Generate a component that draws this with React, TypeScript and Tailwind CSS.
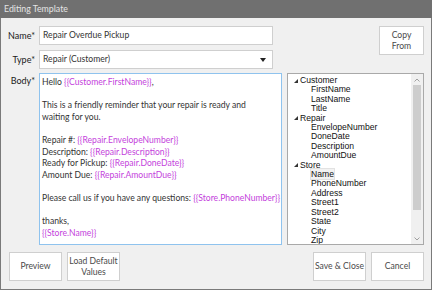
import React from "react";

const M = "text-[#c43fdc]";

function Tok({ t }: { t: string }) {
  return <span className={M}>{`{{${t}}}`}</span>;
}

const tree: { name: string; children: string[] }[] = [
  { name: "Customer", children: ["FirstName", "LastName", "Title"] },
  { name: "Repair", children: ["EnvelopeNumber", "DoneDate", "Description", "AmountDue"] },
  { name: "Store", children: ["Name", "PhoneNumber", "Address", "Street1", "Street2", "State", "City", "Zip"] },
];

function Btn({ children, className = "" }: { children: React.ReactNode; className?: string }) {
  return (
    <div
      className={
        "h-[29px] bg-white border border-[#cfcfcf] flex flex-col items-center justify-center text-[8.6px] leading-[11px] text-[#4a4a4a] text-center " +
        className
      }
    >
      {children}
    </div>
  );
}

export default function App() {
  return (
    <div className="w-[432px] h-[290px] bg-[#f0f0f0] flex flex-col font-['Lato',sans-serif] overflow-hidden">
      <div className="h-[18px] bg-[#707070] text-[#e4e4e4] text-[8.8px] pl-[4px] flex items-center shrink-0">
        Editing Template
      </div>
      <div className="flex-1 border-x border-b border-[#7a7a7a] flex flex-col">
        {/* top */}
        <div className="flex pt-[8px] pr-[7px]">
          <div className="flex flex-col gap-[5px]">
            <div className="flex items-center gap-[4px]">
              <div className="w-[34px] text-right text-[9px] text-[#1a1a1a]">Name*</div>
              <div className="w-[234px] h-[19px] bg-white border border-[#cfcfcf] flex items-center pl-[3px] text-[8.6px] text-[#333]">
                Repair Overdue Pickup
              </div>
            </div>
            <div className="flex items-center gap-[4px]">
              <div className="w-[34px] text-right text-[9px] text-[#1a1a1a]">Type*</div>
              <div className="w-[234px] h-[19px] bg-white border border-[#cfcfcf] flex items-center pl-[3px] pr-[6px] text-[8.6px] text-[#333]">
                <span className="flex-1">Repair (Customer)</span>
                <svg width="6" height="4" viewBox="0 0 6 4">
                  <path d="M0 0h6L3 4z" fill="#222" />
                </svg>
              </div>
            </div>
          </div>
          <div className="flex-1" />
          <Btn className="w-[45px]">
            <span>Copy</span>
            <span>From</span>
          </Btn>
        </div>
        {/* body */}
        <div className="flex mt-[4px] h-[172px] pr-[7px]">
          <div className="w-[34px] text-right text-[9px] text-[#1a1a1a] pt-[1px]">Body*</div>
          <div className="ml-[4px] w-[243px] h-full bg-white border border-[#8fc3ee] pl-[2px] pt-[3px] text-[8.6px] leading-[11.6px] text-[#333]">
            <div>
              Hello <Tok t="Customer.FirstName" />,
            </div>
            <div>&nbsp;</div>
            <div>This is a friendly reminder that your repair is ready and</div>
            <div>waiting for you.</div>
            <div>&nbsp;</div>
            <div>
              Repair #: <Tok t="Repair.EnvelopeNumber" />
            </div>
            <div>
              Description: <Tok t="Repair.Description" />
            </div>
            <div>
              Ready for Pickup: <Tok t="Repair.DoneDate" />
            </div>
            <div>
              Amount Due: <Tok t="Repair.AmountDue" />
            </div>
            <div>&nbsp;</div>
            <div>
              Please call us if you have any questions: <Tok t="Store.PhoneNumber" />
            </div>
            <div>&nbsp;</div>
            <div>thanks,</div>
            <div>
              <Tok t="Store.Name" />
            </div>
          </div>
          <div className="ml-[5px] flex-1 h-full bg-white border border-[#a9a9a9] flex">
            <div className="flex-1 pt-[2px] font-['Liberation_Sans',sans-serif] text-[8.6px] leading-[9.4px] text-[#111] overflow-hidden">
              {tree.map((g) => (
                <div key={g.name}>
                  <div className="flex items-center">
                    <div className="w-[11px] flex justify-end pr-[1px]">
                      <svg width="4" height="4" viewBox="0 0 4 4">
                        <path d="M4 0V4H0z" fill="#333" />
                      </svg>
                    </div>
                    <span className="ml-[1px]">{g.name}</span>
                  </div>
                  {g.children.map((c) => (
                    <div key={c} className="pl-[23px]">
                      <span className={c === "Name" ? "bg-[#f2f2f2] outline outline-1 outline-[#e2e2e2]" : ""}>{c}</span>
                    </div>
                  ))}
                </div>
              ))}
            </div>
            <div className="w-[12px] bg-[#f0f0f0] flex flex-col items-center">
              <div className="h-[11px] flex items-center justify-center">
                <svg width="6" height="4" viewBox="0 0 6 4">
                  <path d="M0.5 3.5L3 1l2.5 2.5" stroke="#a0a0a0" fill="none" strokeWidth="1" />
                </svg>
              </div>
              <div className="w-[8px] h-[125px] bg-[#cdcdcd]" />
              <div className="flex-1" />
              <div className="h-[11px] flex items-center justify-center">
                <svg width="6" height="4" viewBox="0 0 6 4">
                  <path d="M0.5 0.5L3 3l2.5-2.5" stroke="#a0a0a0" fill="none" strokeWidth="1" />
                </svg>
              </div>
            </div>
          </div>
        </div>
        {/* buttons */}
        <div className="flex mt-[7px] pl-[8px] pr-[7px] gap-[5px]">
          <Btn className="w-[53px]">Preview</Btn>
          <Btn className="w-[53px]">
            <span>Load Default</span>
            <span>Values</span>
          </Btn>
          <div className="flex-1" />
          <Btn className="w-[53px]">Save &amp; Close</Btn>
          <Btn className="w-[53px]">Cancel</Btn>
        </div>
      </div>
    </div>
  );
}
